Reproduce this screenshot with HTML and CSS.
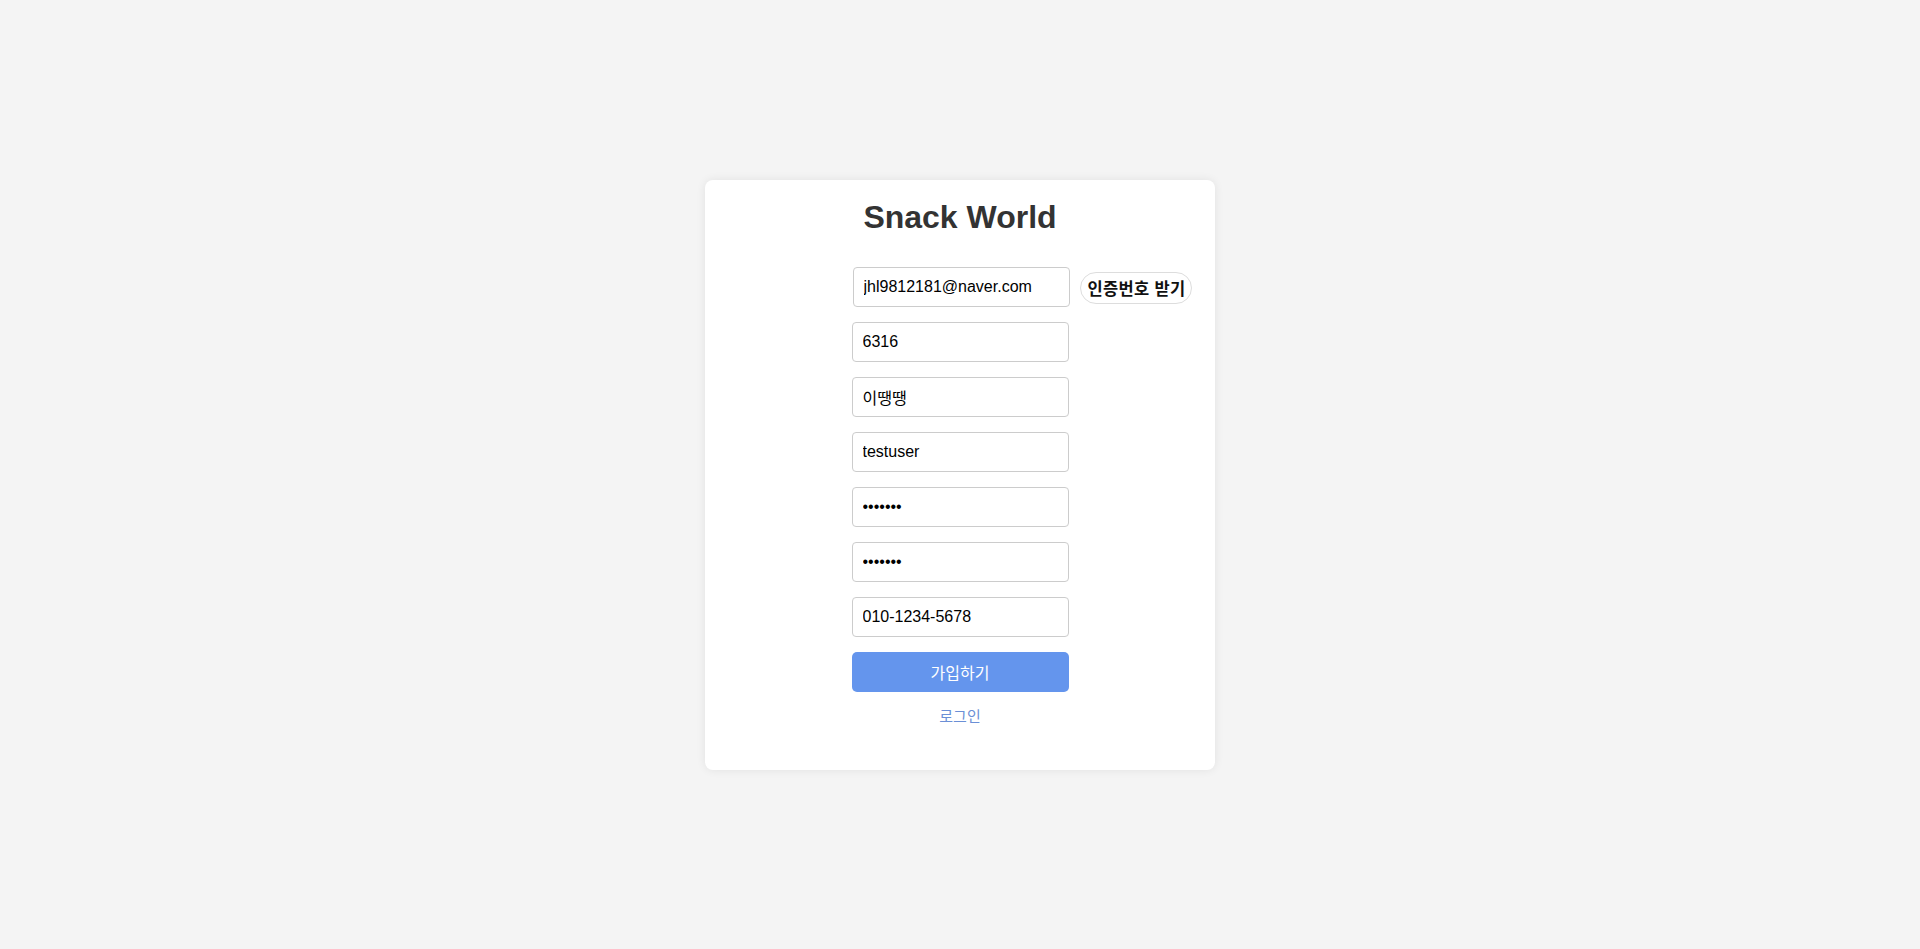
FILE: index.html
```html
<!DOCTYPE html>
<html lang="ko">
<head>
<meta charset="utf-8">
<title>Snack World</title>
<link rel="stylesheet" href="styles.css">
</head>
<body>
  <main class="card">
    <h1 class="title">Snack World</h1>
    <form class="form">
      <div class="email-row">
        <input class="field field-email" type="email" value="jhl9812181@naver.com">
        <button type="button" class="code-btn">인증번호 받기</button>
      </div>
      <input class="field" type="text" value="6316">
      <input class="field" type="text" value="이땡땡">
      <input class="field" type="text" value="testuser">
      <input class="field" type="password" value="1234567">
      <input class="field" type="password" value="1234567">
      <input class="field" type="text" value="010-1234-5678">
      <button type="button" class="submit-btn">가입하기</button>
    </form>
    <div class="login-link"><a href="#">로그인</a></div>
  </main>
</body>
</html>
```
FILE: styles.css
```css
html, body {
  margin: 0;
  padding: 0;
}
body {
  background: #f4f4f4;
  min-height: 100vh;
  display: flex;
  align-items: center;
  justify-content: center;
  font-family: "Liberation Sans", Arial, "Noto Sans CJK KR", sans-serif;
}
.card {
  width: 510px;
  box-sizing: border-box;
  padding: 19px 20px 44px;
  background: #fff;
  border-radius: 8px;
  box-shadow: 0 0 10px rgba(0, 0, 0, 0.08);
}
.title {
  margin: 0 0 31px;
  font-size: 32px;
  line-height: 37px;
  font-weight: bold;
  color: #333;
  text-align: center;
}
.form {
  display: flex;
  flex-direction: column;
  align-items: center;
  gap: 15px;
}
.email-row {
  display: grid;
  grid-template-columns: 1fr 217px 1fr;
  align-items: center;
  width: 100%;
}
.field-email {
  grid-column: 2;
  margin-left: 1px;
}
.code-btn {
  grid-column: 3;
  justify-self: start;
  margin-left: 11px;
  margin-top: 2px;
  width: 112px;
  height: 32px;
  padding: 0 0 0 2px;
  box-sizing: border-box;
  border: 1px solid #ddd;
  border-radius: 16px;
  background: #fff;
  color: #111;
  font-family: "Noto Sans CJK KR", sans-serif;
  font-weight: bold;
  font-size: 16.5px;
  letter-spacing: 0.3px;
  white-space: nowrap;
  cursor: pointer;
}
.field {
  width: 217px;
  height: 40px;
  box-sizing: border-box;
  padding: 0 9px 0 10px;
  border: 1px solid #ccc;
  border-radius: 4px;
  font-family: "Liberation Sans", Arial, "Noto Sans CJK KR", sans-serif;
  font-size: 16px;
  color: #000;
  background: #fff;
  outline: none;
}
.submit-btn {
  width: 217px;
  height: 40px;
  border: none;
  border-radius: 5px;
  background: #6495ed;
  color: #fff;
  font-family: "Noto Sans CJK KR", sans-serif;
  font-size: 16px;
  cursor: pointer;
}
.login-link {
  margin-top: 14px;
  text-align: center;
  font-size: 15px;
  line-height: 20px;
  font-family: "Noto Sans CJK KR", sans-serif;
}
.login-link a {
  color: #6b8fd6;
  text-decoration: none;
}
```
